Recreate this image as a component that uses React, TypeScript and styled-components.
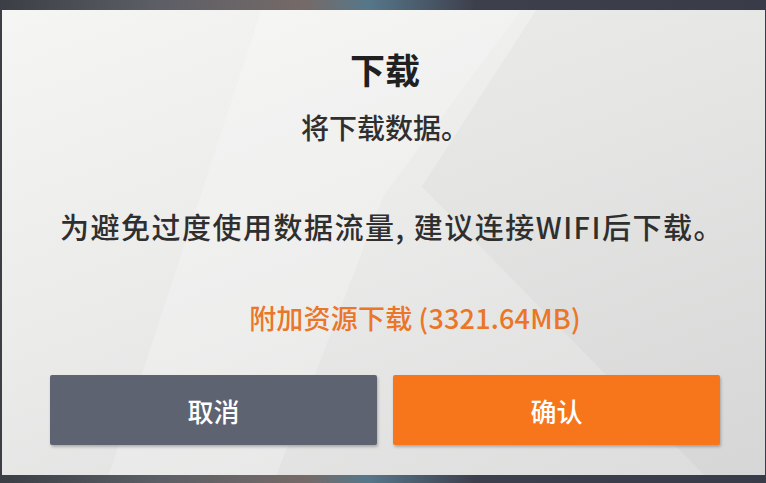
import React from 'react';
import styled, { createGlobalStyle } from 'styled-components';

const GlobalStyle = createGlobalStyle`
  html, body {
    margin: 0;
    padding: 0;
    width: 766px;
    height: 483px;
    overflow: hidden;
    font-family: "Noto Sans CJK SC", "Noto Sans", sans-serif;
  }
`;

const Screen = styled.div`
  width: 766px;
  height: 483px;
  box-sizing: border-box;
  padding: 10px 1px 8px 2px;
  background: linear-gradient(
    90deg,
    #3c3e46 0%,
    #5c5e66 20%,
    #756a68 40%,
    #56778a 48%,
    #3e3f4c 62%,
    #3a3b48 100%
  );
`;

const Dialog = styled.div`
  position: relative;
  height: 100%;
  box-sizing: border-box;
  padding: 37px 45px 30px 48px;
  display: flex;
  flex-direction: column;
  align-items: center;
  overflow: hidden;
  background: linear-gradient(160deg, #f5f5f3 0%, #ebebea 45%, #dcdcdc 100%);

  /* faint diagonal panes in the backdrop */
  &::before {
    content: '';
    position: absolute;
    inset: 0;
    background: rgba(255, 255, 255, 0.22);
    clip-path: polygon(34% 0, 68% 0, 50% 40%, 36% 100%, 14% 100%);
  }
  &::after {
    content: '';
    position: absolute;
    inset: 0;
    background: rgba(0, 0, 0, 0.022);
    clip-path: polygon(70% 0, 100% 0, 100% 100%, 92% 100%, 55% 38%);
  }

  > * {
    position: relative;
    z-index: 1;
  }
`;

const Title = styled.h1`
  margin: 0;
  font-size: 35px;
  line-height: 44px;
  font-weight: 700;
  color: #202020;
`;

const Line = styled.p<{
  $gap: number;
  $tone?: 'plain' | 'accent';
  $size?: number;
  $spacing?: number;
  $shift?: number;
}>`
  margin: ${(p) => p.$gap}px 0 0 ${(p) => p.$shift ?? 0}px;
  font-size: ${(p) => p.$size ?? 28}px;
  letter-spacing: ${(p) => p.$spacing ?? 0}px;
  line-height: 36px;
  font-weight: 500;
  white-space: nowrap;
  color: ${(p) => (p.$tone === 'accent' ? '#ea7627' : '#2f2f2f')};
`;

const Actions = styled.div`
  margin-top: auto;
  align-self: stretch;
  display: grid;
  grid-template-columns: 1fr 1fr;
  gap: 16px;
`;

const Button = styled.button<{ $variant: 'cancel' | 'confirm' }>`
  height: 70px;
  border: none;
  border-radius: 2px;
  font-family: inherit;
  font-size: 26px;
  font-weight: 500;
  color: #fff;
  background: ${(p) => (p.$variant === 'confirm' ? '#f7761b' : '#5e6372')};
  box-shadow: 1px 2px 3px rgba(0, 0, 0, 0.25);
  cursor: pointer;
`;

export default function App() {
  return (
    <>
      <GlobalStyle />
      <Screen>
        <Dialog>
          <Title>下载</Title>
          <Line $gap={18}>将下载数据。</Line>
          <Line $gap={63} $size={29} $spacing={1.5} $shift={14}>
            为避免过度使用数据流量, 建议连接WIFI后下载。
          </Line>
          <Line $gap={56} $tone="accent" $size={27} $spacing={0.2} $shift={60}>
            附加资源下载 (3321.64MB)
          </Line>
          <Actions>
            <Button $variant="cancel">取消</Button>
            <Button $variant="confirm">确认</Button>
          </Actions>
        </Dialog>
      </Screen>
    </>
  );
}
